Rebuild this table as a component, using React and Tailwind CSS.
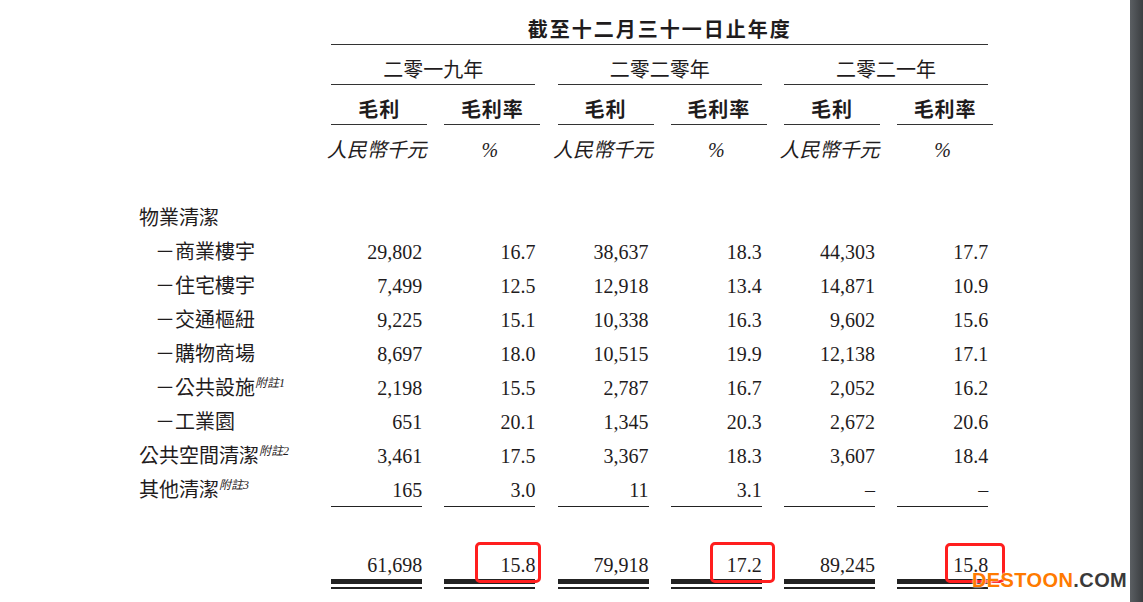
import React from "react";

const rows = [
  { label: "物業清潔" },
  { label: "商業樓宇", sub: true, v: ["29,802", "16.7", "38,637", "18.3", "44,303", "17.7"] },
  { label: "住宅樓宇", sub: true, v: ["7,499", "12.5", "12,918", "13.4", "14,871", "10.9"] },
  { label: "交通樞紐", sub: true, v: ["9,225", "15.1", "10,338", "16.3", "9,602", "15.6"] },
  { label: "購物商場", sub: true, v: ["8,697", "18.0", "10,515", "19.9", "12,138", "17.1"] },
  { label: "公共設施", sub: true, note: "附註1", v: ["2,198", "15.5", "2,787", "16.7", "2,052", "16.2"] },
  { label: "工業園", sub: true, v: ["651", "20.1", "1,345", "20.3", "2,672", "20.6"] },
  { label: "公共空間清潔", note: "附註2", v: ["3,461", "17.5", "3,367", "18.3", "3,607", "18.4"] },
  { label: "其他清潔", note: "附註3", v: ["165", "3.0", "11", "3.1", "–", "–"], last: true },
];

const totals = ["61,698", "15.8", "79,918", "17.2", "89,245", "15.8"];

// hand-drawn red highlight boxes, offsets are relative to the total cell
const boxes = {
  1: "left-[31px] w-[66px] -top-[11px] h-[41px]",
  3: "left-[39px] w-[65px] -top-[11px] h-[41px]",
  5: "left-[48px] w-[60px] -top-[10px] h-[40px]",
};

const grid = "grid grid-cols-[170px_repeat(6,91px)] gap-x-[22.2px]";

const App = () => {
  return (
    <div className="relative flex h-[602px] w-full overflow-hidden bg-white text-[20px] text-[#1f1c1d] font-['Liberation_Serif','Noto_Sans_CJK_TC',serif]">
      <main className="flex-1 pl-[139px]">
        {/* Header */}
        <div className={grid}>
          <div className="col-start-2 col-span-6 pt-[18px] pb-[2px] border-b-[1.5px] border-[#333] text-center font-bold tracking-[2px] leading-[24px]">
            截至十二月三十一日止年度
          </div>

          {["二零一九年", "二零二零年", "二零二一年"].map((y, i) => (
            <div
              key={y}
              className={`${i === 0 ? "col-start-2" : ""} col-span-2 pt-[13px] pb-[2px] border-b-[1.5px] border-[#333] text-center leading-[24px]`}
            >
              {y}
            </div>
          ))}

          {[0, 1, 2, 3, 4, 5].map((i) => (
            <div
              key={i}
              className={`${i === 0 ? "col-start-2" : ""} -mr-[5px] pt-[13px] pb-[2px] border-b-[1.5px] border-[#333] text-center font-bold tracking-[1px] leading-[24px]`}
            >
              {i % 2 === 0 ? "毛利" : "毛利率"}
            </div>
          ))}

          {[0, 1, 2, 3, 4, 5].map((i) => (
            <div
              key={i}
              className={`${i === 0 ? "col-start-2" : ""} flex justify-center whitespace-nowrap pt-[13px] italic leading-[24px]`}
            >
              {i % 2 === 0 ? "人民幣千元" : "%"}
            </div>
          ))}
        </div>

        {/* Body rows */}
        <div className="mt-[39px]">
          {rows.map((r) => (
            <div key={r.label} className={`${grid} h-[34px]`}>
              <div className={`flex items-center whitespace-nowrap ${r.sub ? "pl-[16px]" : ""}`}>
                {r.sub && <span>－</span>}
                <span>{r.label}</span>
                {r.note && (
                  <span className="relative -top-[5px] text-[12px] italic leading-none">{r.note}</span>
                )}
              </div>
              {r.v &&
                r.v.map((n, i) => (
                  <div
                    key={i}
                    className={`flex items-center justify-end ${r.last ? "border-b-[1.5px] border-[#222]" : ""}`}
                  >
                    {n}
                  </div>
                ))}
            </div>
          ))}
        </div>

        {/* Totals */}
        <div className={`${grid} mt-[46px]`}>
          {totals.map((n, i) => (
            <div key={i} className={`${i === 0 ? "col-start-2" : ""} relative`}>
              <div className="pb-[2px] text-right leading-[24px]">{n}</div>
              <div className="h-[5px] bg-[#222]" />
              <div className="mt-[3px] h-[1.5px] bg-[#222]" />
              {boxes[i] && (
                <div className={`absolute rounded-[5px] border-[3px] border-[#ff1e1e] ${boxes[i]}`} />
              )}
            </div>
          ))}
        </div>
      </main>

      <aside className="h-full w-[13px] bg-gradient-to-r from-[#5b5f63] to-[#3b3e41]" />

      {/* Watermark */}
      <div className="absolute left-[972px] top-[568px] font-['Liberation_Sans',sans-serif] text-[20px] font-bold tracking-[0.4px] leading-[24px] [text-shadow:0_0_2px_#fff,0_0_2px_#fff]">
        <span className="text-[#ff7a00]">DESTOON</span>
        <span className="text-[#3a3a3a]">.COM</span>
      </div>
    </div>
  );
};

export default App;
